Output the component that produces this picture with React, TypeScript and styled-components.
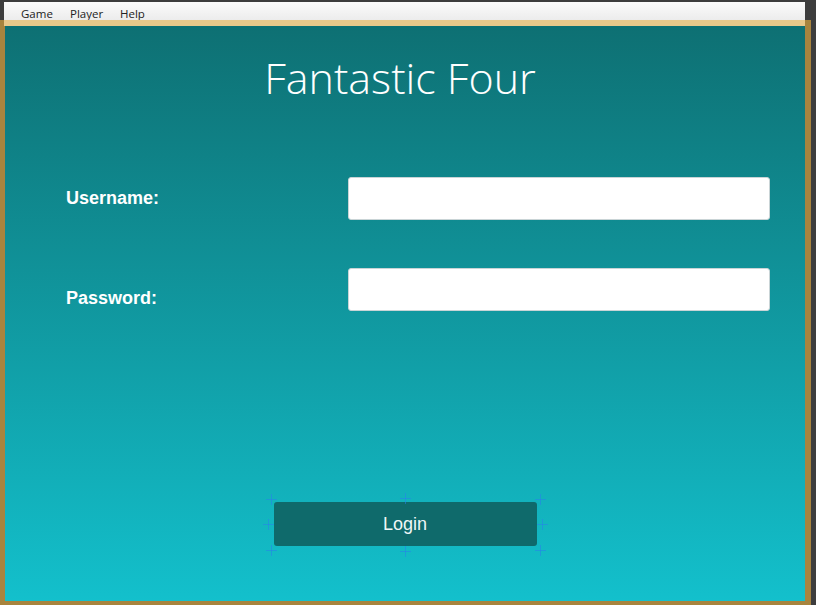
import React from "react";
import styled, { createGlobalStyle } from "styled-components";

const Global = createGlobalStyle`
  html, body { margin: 0; padding: 0; background: #3d3d3d; }
  * { box-sizing: border-box; }
`;

const Page = styled.div`
  width: 816px;
  height: 605px;
  background: #3d3d3d;
  display: flex;
  flex-direction: column;
  overflow: hidden;
`;

const MenuBar = styled.div`
  margin: 2px 0 0 4px;
  width: 801px;
  height: 18px;
  background: linear-gradient(#fbfbfb, #ececec);
  display: flex;
  align-items: flex-start;
  padding-left: 17px;
`;

const MenuItem = styled.span<{ $w: number }>`
  width: ${(p) => p.$w}px;
  font-family: "Open Sans", "Noto Sans", sans-serif;
  font-size: 11.5px;
  color: #222;
  line-height: 17px;
  padding-top: 3px;
`;

const Frame = styled.div`
  width: 811px;
  flex: 1;
  background: #a8843e;
  padding: 0 6px 4px 5px;
  display: flex;
  flex-direction: column;
`;

const TanStrip = styled.div`
  height: 6px;
  background: #e9c88a;
  margin-left: -1px;
`;

const Content = styled.div`
  flex: 1;
  background: linear-gradient(#0e7073, #13c0cc);
  display: flex;
  flex-direction: column;
  position: relative;
`;

const Title = styled.h1`
  margin: 24px 10px 0 0;
  text-align: center;
  font-family: "Open Sans", "Noto Sans", sans-serif;
  font-weight: 350;
  font-size: 43px;
  line-height: 56px;
  color: #ffffff;
`;

const Form = styled.div`
  margin: 71px 35px 0 61px;
  display: grid;
  grid-template-columns: 1fr 422px;
  grid-template-rows: 43px 43px;
  row-gap: 48px;
`;

const Label = styled.label<{ $shift: number }>`
  font-family: "Liberation Sans", Arial, sans-serif;
  font-weight: bold;
  font-size: 18px;
  color: #ffffff;
  display: flex;
  align-items: center;
  padding-top: ${(p) => p.$shift}px;
`;

const Input = styled.input`
  width: 422px;
  height: 43px;
  border: 1px solid #c9d4d6;
  border-radius: 3px;
  background: #ffffff;
  outline: none;
`;

const ButtonWrap = styled.div`
  margin: 191px auto 0;
  position: relative;
  width: 263px;
  height: 44px;
`;

const LoginButton = styled.button`
  width: 263px;
  height: 44px;
  border: none;
  border-radius: 3px;
  background: #0f6a6b;
  color: #eef6f6;
  font-family: "Liberation Sans", Arial, sans-serif;
  font-size: 18px;
`;

const Handle = styled.span<{ $x: number; $y: number }>`
  position: absolute;
  left: ${(p) => p.$x - 5}px;
  top: ${(p) => p.$y - 5}px;
  width: 11px;
  height: 11px;
  pointer-events: none;
  &::before, &::after {
    content: "";
    position: absolute;
    background: rgba(40, 130, 235, 0.55);
  }
  &::before { left: 5px; top: 0; width: 1px; height: 11px; }
  &::after { left: 0; top: 5px; width: 11px; height: 1px; }
`;

const handles: [number, number][] = [
  [-3, -3], [131, -4], [266, -3],
  [-6, 22], [268, 22],
  [-3, 48], [131, 49], [266, 48],
];

export default function App() {
  return (
    <Page>
      <Global />
      <MenuBar>
        <MenuItem $w={49}>Game</MenuItem>
        <MenuItem $w={50}>Player</MenuItem>
        <MenuItem $w={40}>Help</MenuItem>
      </MenuBar>
      <Frame>
        <TanStrip />
        <Content>
          <Title>Fantastic Four</Title>
          <Form>
            <Label $shift={0}>Username:</Label>
            <Input type="text" />
            <Label $shift={17}>Password:</Label>
            <Input type="password" />
          </Form>
          <ButtonWrap>
            <LoginButton>Login</LoginButton>
            {handles.map(([x, y], i) => (
              <Handle key={i} $x={x} $y={y} />
            ))}
          </ButtonWrap>
        </Content>
      </Frame>
    </Page>
  );
}
